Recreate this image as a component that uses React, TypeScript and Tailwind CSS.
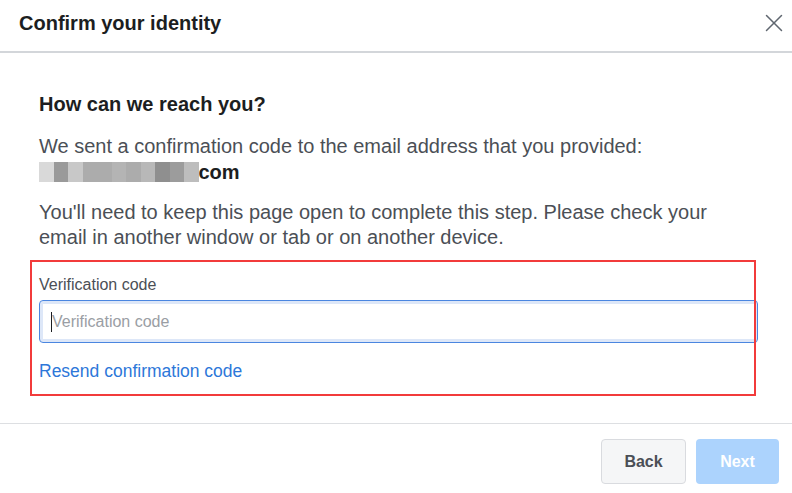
import { X } from "lucide-react";

const blocks = [
  "#d9d9d9",
  "#9a9a9a",
  "#c8c8c8",
  "#acacac",
  "#acacac",
  "#b4b4b4",
  "#acacac",
  "#b8b8b8",
  "#8f8f8f",
  "#9c9c9c",
  "#bdbdbd",
];

export default function App() {
  return (
    <div
      className="w-[792px] h-[493px] bg-white flex flex-col text-[#1c1e21] overflow-hidden"
      style={{ fontFamily: '"Liberation Sans", Arial, sans-serif' }}
    >
      <div className="h-[53px] flex items-start justify-between pl-[19px] pr-[3px] border-b-2 border-[#d3d6da] shrink-0">
        <h1 className="mt-[11px] text-[20px] leading-[24px] font-bold text-[#1c1e21]">Confirm your identity</h1>
        <X className="mt-[8px] w-[30px] h-[30px] text-[#606770]" strokeWidth={1.2} />
      </div>

      <div className="flex-1 px-[39px] pt-[40px]">
        <h2 className="text-[20px] font-bold leading-[22px]">How can we reach you?</h2>
        <p className="mt-[18px] text-[20px] leading-[26px] text-[#4b4f56]">
          We sent a confirmation code to the email address that you provided:
        </p>
        <div className="flex items-center h-[26px]">
          <div className="flex h-[20px] blur-[0.7px]">
            {blocks.map((c, i) => (
              <div key={i} className="w-[14.5px] h-full" style={{ backgroundColor: c }} />
            ))}
          </div>
          <span className="text-[20px] font-bold text-[#1c1e21]">com</span>
        </div>
        <p className="mt-[15px] text-[20px] leading-[25px] text-[#4b4f56]">
          You'll need to keep this page open to complete this step. Please check your email in another window or tab or
          on another device.
        </p>

        <div className="relative mt-[10px]">
          <div className="absolute left-[-9px] top-0 w-[726px] h-[136px] border-2 border-[#f23b3b] pointer-events-none" />
          <div className="pt-[15px]">
            <label className="block text-[16px] leading-[20px] text-[#4b4f56]">Verification code</label>
            <div className="mt-[5px] w-[719px] h-[43px] rounded-[4px] border border-[#4a86e0] shadow-[inset_0_0_0_3px_#dde7f8] flex items-center px-[11px]">
              <span className="w-px h-[20px] bg-[#1c1e21]" />
              <span className="text-[16px] text-[#9a9ea4]">Verification code</span>
            </div>
            <a className="block mt-[17px] text-[17.5px] leading-[22px] text-[#2d77d9]">Resend confirmation code</a>
          </div>
        </div>
      </div>

      <div className="h-[70px] border-t border-[#dddfe2] flex items-start justify-end gap-[10px] pt-[15px] pr-[13px] shrink-0">
        <button className="w-[85px] h-[45px] rounded-[4px] border border-[#d9dbdf] bg-[#f5f6f7] text-[16px] font-bold text-[#4b4f56]">
          Back
        </button>
        <button className="w-[83px] h-[45px] rounded-[4px] bg-[#acd3fd] text-[16px] font-bold text-white">Next</button>
      </div>
    </div>
  );
}
